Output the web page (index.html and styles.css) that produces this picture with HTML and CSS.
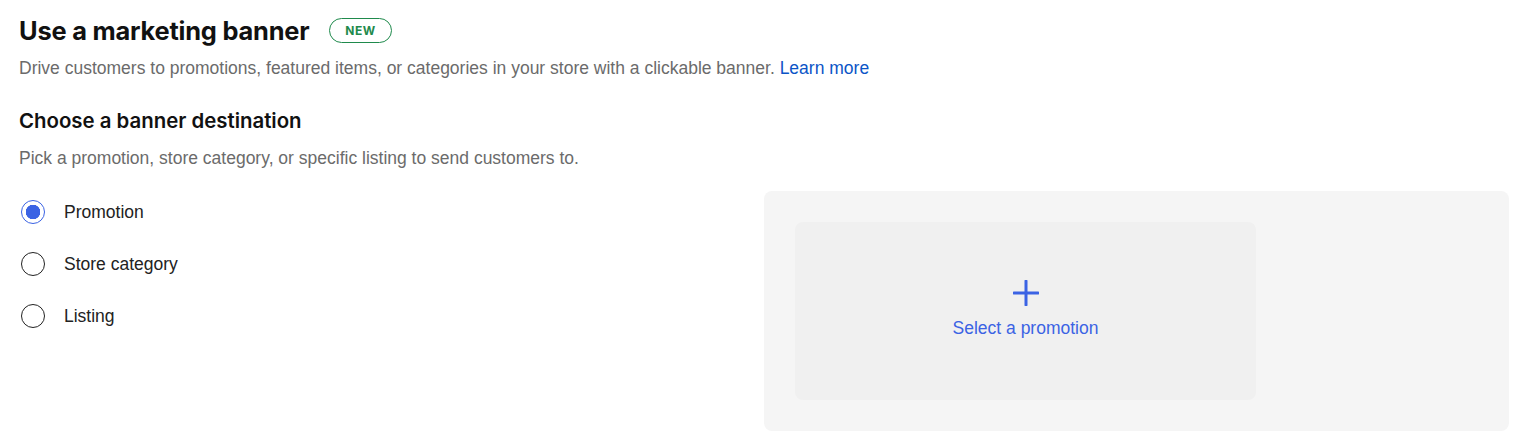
FILE: index.html
```html
<!DOCTYPE html>
<html lang="en">
<head>
    <meta charset="UTF-8">
    <meta name="viewport" content="width=device-width, initial-scale=1.0">
    <title>Use a marketing banner</title>
<link rel="stylesheet" href="styles.css">
</head>
<body>

<div id="wrapper">
    <div class="title-row">
        <h2>Use a marketing banner</h2>
        <span class="badge">NEW</span>
    </div>
    <p class="desc">Drive customers to promotions, featured items, or categories in your store with a clickable banner. <a href="#">Learn more</a></p>

    <h3>Choose a banner destination</h3>
    <p class="desc sub">Pick a promotion, store category, or specific listing to send customers to.</p>

    <div class="columns">
        <div class="options">
            <label class="option">
                <input type="radio" name="dest" checked>
                <span class="radio"></span>
                <span>Promotion</span>
            </label>
            <label class="option">
                <input type="radio" name="dest">
                <span class="radio"></span>
                <span>Store category</span>
            </label>
            <label class="option">
                <input type="radio" name="dest">
                <span class="radio"></span>
                <span>Listing</span>
            </label>
        </div>
        <div class="preview">
            <a class="picker" href="#">
                <svg width="26" height="26" viewBox="0 0 26 26" aria-hidden="true">
                    <path d="M13 1v24M1 13h24" stroke="#3b63e4" stroke-width="3" stroke-linecap="round" fill="none"/>
                </svg>
                <span>Select a promotion</span>
            </a>
        </div>
    </div>
</div>

</body>
</html>
```

FILE: styles.css
```css
body {
    margin: 0;
    background: #fff;
    font-family: "Liberation Sans", Arial, sans-serif;
    color: #222;
}
#wrapper {
    padding: 13px 10px 0 19px;
}
.title-row {
    display: flex;
    align-items: center;
    gap: 20px;
    height: 34px;
}
h2 {
    margin: 0;
    font-family: Inter, "Liberation Sans", sans-serif;
    font-size: 25.4px;
    font-weight: 700;
    letter-spacing: -0.2px;
    color: #111;
}
.badge {
    display: inline-block;
    height: 23px;
    line-height: 23px;
    padding: 0 15px;
    border: 1px solid #1f8a4c;
    border-radius: 13px;
    font-family: Inter, "Liberation Sans", sans-serif;
    font-size: 12px;
    font-weight: 700;
    letter-spacing: 0.5px;
    color: #1f8a4c;
}
.desc {
    margin: 8px 0 0;
    font-size: 17.5px;
    line-height: 26px;
    color: #6b6b6b;
}
.desc a {
    color: #0b55c7;
    text-decoration: none;
}
h3 {
    margin: 25px 0 0;
    font-family: Inter, "Liberation Sans", sans-serif;
    font-size: 20.4px;
    font-weight: 600;
    line-height: 30px;
    color: #111;
}
.sub {
    margin-top: 9px;
}
.columns {
    display: grid;
    grid-template-columns: 1fr 1fr;
    margin-top: 20px;
}
.options {
    display: flex;
    flex-direction: column;
    gap: 26px;
    padding-top: 8px;
}
.option {
    display: flex;
    align-items: center;
    gap: 19px;
    height: 26px;
    font-size: 17.5px;
    color: #222;
    cursor: pointer;
}
.option input {
    display: none;
}
.radio {
    box-sizing: border-box;
    width: 24px;
    height: 24px;
    margin-left: 2px;
    border: 1.5px solid #222;
    border-radius: 50%;
    background: #fff;
}
.option input:checked + .radio {
    border-color: #3b63e4;
    background: radial-gradient(circle, #3b63e4 0 7px, #fff 7.5px);
}
.preview {
    padding: 31px;
    height: 178px;
    background: #f5f5f5;
    border-radius: 8px;
}
.picker {
    display: flex;
    flex-direction: column;
    align-items: center;
    justify-content: center;
    gap: 12px;
    width: 461px;
    height: 178px;
    background: #f0f0f0;
    border-radius: 8px;
    color: #3b63e4;
    font-size: 17.5px;
    line-height: 20px;
    text-decoration: none;
}
.picker svg {
    margin-top: -4px;
}
```
